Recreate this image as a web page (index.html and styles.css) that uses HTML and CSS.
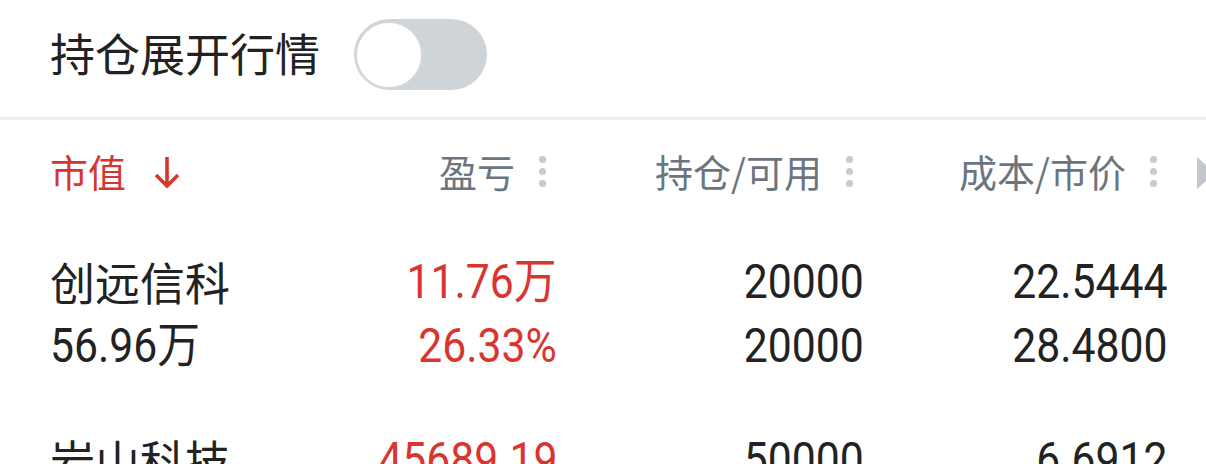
FILE: index.html
```html
<!DOCTYPE html>
<html lang="zh-CN">
<head>
    <meta charset="UTF-8">
    <meta name="viewport" content="width=device-width, initial-scale=1.0">
    <title>持仓</title>
    <link rel="stylesheet" href="styles.css">
</head>
<body>
    <div class="topbar">
        <span class="topbar-title">持仓展开行情</span>
        <div class="switch"><span class="knob"></span></div>
    </div>

    <div class="table">
        <div class="head">
            <div class="hcell sort">市值
                <svg class="arrow" width="26" height="34" viewBox="0 0 26 34">
                    <path d="M13 2 V31 M2 20 L13 31 L24 20" fill="none" stroke="#d9352f" stroke-width="3.6"/>
                </svg>
            </div>
            <div class="hcell right">盈亏<span class="dots"><i></i><i></i><i></i></span></div>
            <div class="hcell right">持仓/可用<span class="dots"><i></i><i></i><i></i></span></div>
            <div class="hcell right">成本/市价<span class="dots"><i></i><i></i><i></i></span></div>
            <span class="more"></span>
        </div>

        <div class="row">
            <div class="cell">创远信科</div>
            <div class="cell num up"><span>11.76万</span></div>
            <div class="cell num"><span>20000</span></div>
            <div class="cell num"><span>22.5444</span></div>
            <div class="cell num"><span>56.96万</span></div>
            <div class="cell num up"><span>26.33%</span></div>
            <div class="cell num"><span>20000</span></div>
            <div class="cell num"><span>28.4800</span></div>
        </div>

        <div class="row">
            <div class="cell">岩山科技</div>
            <div class="cell num up"><span>45689.19</span></div>
            <div class="cell num"><span>50000</span></div>
            <div class="cell num"><span>6.6912</span></div>
            <div class="cell num"><span>31.20万</span></div>
            <div class="cell num up"><span>17.10%</span></div>
            <div class="cell num"><span>50000</span></div>
            <div class="cell num"><span>7.6050</span></div>
        </div>
    </div>
</body>
</html>
```

FILE: styles.css
```css
body {
    margin: 0;
    background: #fff;
    font-family: "Noto Sans CJK SC", "Noto Sans", sans-serif;
    color: #222;
    overflow: hidden;
}
.topbar {
    height: 109px;
    padding-bottom: 8px;
    display: flex;
    align-items: center;
    padding-left: 50px;
    border-bottom: 3px solid #eeeeee;
}
.topbar-title {
    font-size: 45px;
    line-height: 1;
    margin-top: -4px;
}
.switch {
    width: 133px;
    height: 71px;
    margin-left: 34px;
    border-radius: 36px;
    background: #cfd4d8;
    display: flex;
    align-items: center;
    padding-left: 1px;
    box-sizing: border-box;
}
.knob {
    width: 64px;
    height: 64px;
    border-radius: 50%;
    background: #fff;
    border: 2px solid #d3d7db;
}
.head, .row {
    display: grid;
    grid-template-columns: 200px 307px 307px 304px;
    padding-left: 50px;
}
.head {
    position: relative;
    height: 102px;
    align-items: center;
}
.hcell {
    font-size: 38px;
    color: #6b7580;
    display: flex;
    align-items: center;
    line-height: 1;
}
.hcell.right {
    justify-content: flex-end;
    padding-right: 11px;
}
.sort {
    color: #d9352f;
}
.arrow {
    margin-left: 28px;
    margin-top: 2px;
}
.dots {
    display: flex;
    flex-direction: column;
    gap: 5px;
    margin-left: 24px;
}
.dots i {
    width: 7px;
    height: 7px;
    border-radius: 50%;
    background: #c6cacf;
}
.more {
    position: absolute;
    right: -9px;
    top: 37px;
    border-left: 18px solid #c3c7cc;
    border-top: 16px solid transparent;
    border-bottom: 16px solid transparent;
}
.row {
    padding-top: 28px;
    padding-bottom: 22px;
}
.cell {
    font-size: 45px;
    line-height: 64px;
    white-space: nowrap;
}
.num {
    font-family: "Roboto", "Noto Sans CJK SC", sans-serif;
    font-size: 48px;
    text-align: right;
}
.num span {
    display: inline-block;
    transform: scaleX(0.89);
    transform-origin: right center;
}
.row .cell:nth-child(4n+1) {
    text-align: left;
}
.row .cell:nth-child(4n+1) span {
    transform-origin: left center;
}
.up {
    color: #d9352f;
}
```
